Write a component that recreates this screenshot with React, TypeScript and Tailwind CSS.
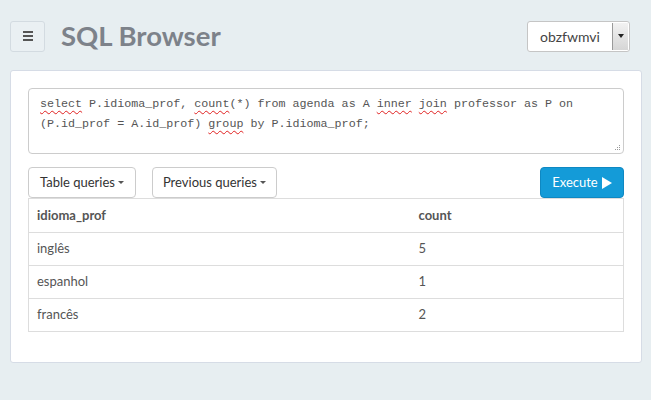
import React from "react";

const rows = [
  { idioma: "inglês", count: 5 },
  { idioma: "espanhol", count: 1 },
  { idioma: "francês", count: 2 },
];

function Caret() {
  return (
    <span className="ml-[3px] inline-block h-0 w-0 border-x-[3.5px] border-t-[3.5px] border-x-transparent border-t-[#555] align-middle" />
  );
}

export default function App() {
  return (
    <div
      className="h-[400px] w-[651px] overflow-hidden bg-[#e7eef1] text-[#555]"
      style={{ fontFamily: "Lato, 'Open Sans', sans-serif" }}
    >
      <div className="flex h-[70px] items-center justify-between pr-[21px] pl-[10px] pt-[2px]">
        <div className="flex items-center">
          <button
            type="button"
            className="flex h-[31px] w-[35px] items-center justify-center rounded-[3px] border border-[#d3dbe1] bg-[#eaf0f3]"
          >
            <span className="flex flex-col gap-[2px]">
              <span className="block h-[2px] w-[10px] bg-[#555]" />
              <span className="block h-[2px] w-[10px] bg-[#555]" />
              <span className="block h-[2px] w-[10px] bg-[#555]" />
            </span>
          </button>
          <h1 className="ml-[16px] text-[27.5px] leading-none font-bold text-[#7d828a]">
            SQL Browser
          </h1>
        </div>
        <div className="flex h-[31px] w-[103px] items-stretch rounded-[3px] border border-[#c5c5c5] bg-white">
          <div className="flex flex-1 items-center justify-center text-[14px] text-[#444]">
            obzfwmvi
          </div>
          <div className="my-[1px] mr-[1px] flex w-[16px] items-center justify-center border-l border-[#9a9a9a] bg-gradient-to-b from-[#f2f2f2] to-[#d6d6d6]">
            <span className="block h-0 w-0 border-x-[3px] border-t-[4px] border-x-transparent border-t-[#222]" />
          </div>
        </div>
      </div>

      <div className="mx-[10px] h-[293px] w-[632px] rounded-[3px] border border-[#d6dce6] bg-white px-[17px] pt-[17px]">
        <div className="relative h-[66px] w-full rounded-[4px] border border-[#cccccc] px-[11px] pt-[5px]">
          <p
            className="text-[11.7px] leading-[20px] text-[#555]"
            style={{ fontFamily: "'Liberation Mono', monospace" }}
          >
            <span className="underline decoration-[#e02020] decoration-wavy decoration-1 underline-offset-[3px]">select</span>{" "}
            P.idioma_prof,{" "}
            <span className="underline decoration-[#e02020] decoration-wavy decoration-1 underline-offset-[3px]">count</span>
            (*) from agenda as A{" "}
            <span className="underline decoration-[#e02020] decoration-wavy decoration-1 underline-offset-[3px]">inner</span>{" "}
            <span className="underline decoration-[#e02020] decoration-wavy decoration-1 underline-offset-[3px]">join</span>{" "}
            professor as P on
            <br />
            (P.id_prof = A.id_prof){" "}
            <span className="underline decoration-[#e02020] decoration-wavy decoration-1 underline-offset-[3px]">group</span>{" "}
            by P.idioma_prof;
          </p>
          <svg className="absolute right-[2px] bottom-[2px]" width="7" height="7" viewBox="0 0 7 7">
            <rect x="5" y="1" width="1" height="1" fill="#999" />
            <rect x="3" y="3" width="1" height="1" fill="#999" />
            <rect x="5" y="3" width="1" height="1" fill="#999" />
            <rect x="1" y="5" width="1" height="1" fill="#999" />
            <rect x="3" y="5" width="1" height="1" fill="#999" />
            <rect x="5" y="5" width="1" height="1" fill="#999" />
          </svg>
        </div>

        <div className="mt-[13px] flex items-center">
          <button
            type="button"
            className="flex h-[31px] items-center rounded-[4px] border border-[#cccccc] bg-white px-[11px] text-[13px] text-[#333]"
          >
            Table queries
            <Caret />
          </button>
          <button
            type="button"
            className="ml-[16px] flex h-[31px] items-center rounded-[4px] border border-[#cccccc] bg-white px-[10px] text-[13px] text-[#333]"
          >
            Previous queries
            <Caret />
          </button>
          <button
            type="button"
            className="ml-auto flex h-[31px] w-[84px] items-center justify-center rounded-[4px] border border-[#0f88c2] bg-[#149bd8] text-[13px] text-white"
          >
            Execute
            <svg className="ml-[4px]" width="10" height="12" viewBox="0 0 10 12">
              <path d="M0 0 L10 6 L0 12 Z" fill="#fff" />
            </svg>
          </button>
        </div>

        <table className="w-full border-collapse border border-[#dddddd] text-left text-[13px] text-[#555]">
          <thead>
            <tr className="h-[34px]">
              <th className="w-[382px] border-b border-[#dddddd] px-[8px] font-bold">idioma_prof</th>
              <th className="border-b border-[#dddddd] px-[8px] font-bold">count</th>
            </tr>
          </thead>
          <tbody>
            {rows.map((r) => (
              <tr key={r.idioma} className="h-[33px]">
                <td className="border-b border-[#dddddd] px-[8px]">{r.idioma}</td>
                <td className="border-b border-[#dddddd] px-[8px]">{r.count}</td>
              </tr>
            ))}
          </tbody>
        </table>
      </div>
    </div>
  );
}
